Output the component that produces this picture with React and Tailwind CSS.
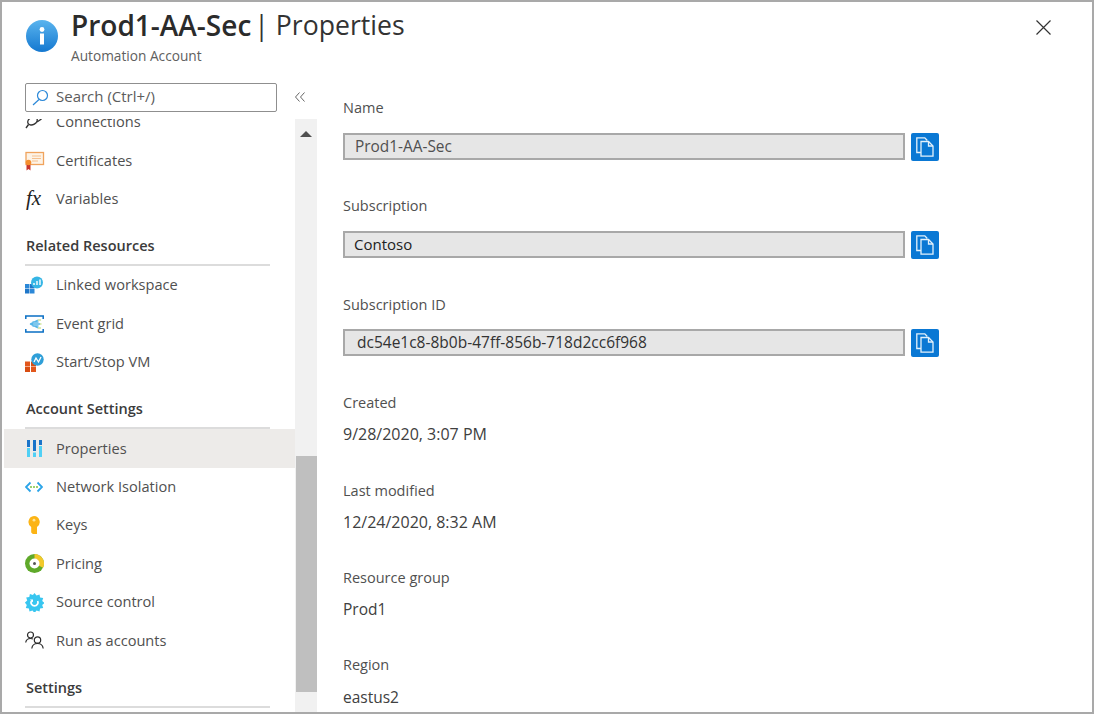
const FONT = "font-['Open_Sans','Noto_Sans',sans-serif]";

const InfoIcon = () => (
  <svg width="32" height="32" viewBox="0 0 32 32">
    <defs>
      <linearGradient id="info" x1="0" y1="0" x2="0" y2="1">
        <stop offset="0" stopColor="#5ab4ee" />
        <stop offset="1" stopColor="#1478d0" />
      </linearGradient>
    </defs>
    <circle cx="16" cy="16" r="16" fill="url(#info)" />
    <circle cx="16" cy="9.5" r="2.4" fill="#fff" />
    <rect x="14" y="13.5" width="4" height="11" fill="#fff" />
  </svg>
);

const ConnectionsIcon = () => (
  <svg width="18" height="18" viewBox="0 0 18 18" fill="none" stroke="#333" strokeWidth="1.4">
    <ellipse cx="7.5" cy="8" rx="5" ry="3.6" transform="rotate(-30 7.500 8)" />
    <path d="M3.500 11.500 1 15M11 4 16.500 2M12 9l4.500-3" />
  </svg>
);

const CertificateIcon = () => (
  <svg width="20" height="20" viewBox="0 0 20 20">
    <rect x="1" y="1.5" width="17.500" height="12" fill="#fdf3e6" stroke="#f0a35c" strokeWidth="1.300" />
    <path d="M7 5h9M7 7.500h9M7 10h6" stroke="#f5c08e" strokeWidth="1" />
    <path d="M1.500 13.500h4v6l-2-1.500-2 1.500z" fill="#c8342c" />
    <circle cx="3.500" cy="11.500" r="2.800" fill="#f48f2e" />
  </svg>
);

const FxIcon = () => (
  <span className="ml-[1px] font-['Liberation_Serif',serif] text-[21px] italic leading-none text-[#222]">fx</span>
);

const LinkedIcon = () => (
  <svg width="18" height="18" viewBox="0 0 18 18">
    <rect x="0" y="8" width="4.500" height="4.500" fill="#2b88d8" />
    <rect x="5" y="8" width="4.500" height="4.500" fill="#1f77c9" />
    <rect x="0" y="13" width="4.500" height="4.500" fill="#1f77c9" />
    <rect x="5" y="13" width="4.500" height="4.500" fill="#2b88d8" />
    <circle cx="12" cy="6.500" r="6" fill="#35b5e5" />
    <path d="M9 9V7M12 9V5M15 9V3.500" stroke="#fff" strokeWidth="1.400" />
  </svg>
);

const EventGridIcon = () => (
  <svg width="19" height="18" viewBox="0 0 19 18" fill="none">
    <path d="M.8 4V1h17.400v3M.8 14v3h17.400v-3" stroke="#0a6fc4" strokeWidth="1.500" />
    <path d="M5 9 13 5M5 9h10M5 9l8 4M7.500 7h6M7.500 11h6" stroke="#56b6e8" strokeWidth="1.300" />
    <path d="M13 5h3M15 9h1.500M13 13h3" stroke="#b5d86a" strokeWidth="1.200" />
  </svg>
);

const StartStopIcon = () => (
  <svg width="19" height="19" viewBox="0 0 19 19">
    <rect x="0" y="8.500" width="5" height="5" fill="#e2571c" />
    <rect x="6" y="8.500" width="5" height="5" fill="#d84d12" />
    <rect x="0" y="14" width="5" height="5" fill="#d84d12" />
    <rect x="6" y="14" width="5" height="5" fill="#e2571c" />
    <circle cx="12.500" cy="6.500" r="6.200" fill="#2f9fd8" />
    <path d="M9 9l2-4 2.500 4 2.500-5" fill="none" stroke="#fff" strokeWidth="1.300" />
  </svg>
);

const PropertiesIcon = () => (
  <svg className="ml-[2px]" width="15" height="17" viewBox="0 0 15 17">
    <rect x="0" y="0" width="3" height="7" fill="#1b74c9" />
    <rect x="0" y="8" width="3" height="9" fill="#50d0f5" />
    <rect x="6" y="0" width="3" height="11" fill="#1b74c9" />
    <rect x="6" y="12.500" width="3" height="4.500" fill="#50d0f5" />
    <rect x="12" y="0" width="3" height="5" fill="#1b74c9" />
    <rect x="12" y="6" width="3" height="11" fill="#50d0f5" />
  </svg>
);

const NetworkIcon = () => (
  <svg width="18" height="12" viewBox="0 0 18 12" fill="none">
    <path d="M5.500 1.500 1 6l4.500 4.500" stroke="#2ba4e8" strokeWidth="1.800" />
    <path d="M12.500 1.500 17 6l-4.500 4.500" stroke="#2ba4e8" strokeWidth="1.800" />
    <circle cx="6" cy="6" r="1" fill="#7cc242" />
    <circle cx="9" cy="6" r="1" fill="#7cc242" />
    <circle cx="12" cy="6" r="1" fill="#7cc242" />
  </svg>
);

const KeyIcon = () => (
  <svg className="ml-[3px]" width="12" height="18" viewBox="0 0 12 18">
    <path d="M6 0a6 6 0 0 1 3 11v7H4.800L3.200 16.500V11A6 6 0 0 1 6 0z" fill="#fcb415" />
    <circle cx="6" cy="4.200" r="1.400" fill="#fde59a" />
  </svg>
);

const PricingIcon = () => (
  <svg width="19" height="19" viewBox="0 0 19 19">
    <circle cx="9.500" cy="9.500" r="9.500" fill="#5fa92a" />
    <path d="M9.500 0a9.500 9.500 0 0 1 8.500 13.800l-8.500-4.300z" fill="#f3c92a" />
    <circle cx="9.500" cy="9.500" r="5" fill="#fff" />
    <circle cx="9.500" cy="9.500" r="1.500" fill="#555" />
  </svg>
);

const SourceControlIcon = () => (
  <svg width="19" height="19" viewBox="0 0 19 19">
    <path
      d="M9.500 0l2 2.400 3-1 .6 3.100 3.100.6-1 3 2.300 1.900-2.300 1.900 1 3-3.100.6-.6 3.100-3-1-2 2.400-2-2.400-3 1-.6-3.100-3.100-.6 1-3L-.1 9.500l2.300-1.900-1-3 3.100-.6.6-3.100 3 1z"
      fill="#38c6f0"
    />
    <path d="M6.300 8a3.500 3.500 0 1 0 6.400 0" fill="none" stroke="#fff" strokeWidth="1.700" />
    <path d="M5 6.500h3v3z" fill="#fff" />
  </svg>
);

const RunAsIcon = () => (
  <svg width="19" height="18" viewBox="0 0 19 18" fill="none" stroke="#2a2a2a" strokeWidth="1.200">
    <circle cx="5.500" cy="4" r="3" />
    <path d="M.7 11.500c.4-2.600 2.200-4 4.800-4 1 0 1.800.2 2.500.6" />
    <circle cx="12.500" cy="9" r="3.200" />
    <path d="M6.800 17.500c.4-3 2.600-5 5.700-5s5.300 2 5.700 5" />
  </svg>
);

const CopyIcon = () => (
  <svg width="18" height="20" viewBox="0 0 18 20" fill="none" stroke="#e4f1fb" strokeWidth="1.300">
    <path d="M5 15.500H.8V.8h8l2.500 2.700" />
    <path d="M5 4.500h7.500l4.500 4.500v10.200H5z" />
    <path d="M12.500 4.500V9H17" />
  </svg>
);

const SECTIONS_A = [
  { label: "Certificates", icon: <CertificateIcon /> },
  { label: "Variables", icon: <FxIcon /> },
];
const SECTIONS_B = [
  { label: "Linked workspace", icon: <LinkedIcon /> },
  { label: "Event grid", icon: <EventGridIcon /> },
  { label: "Start/Stop VM", icon: <StartStopIcon /> },
];
const SECTIONS_C = [
  { label: "Properties", icon: <PropertiesIcon />, active: true },
  { label: "Network Isolation", icon: <NetworkIcon /> },
  { label: "Keys", icon: <KeyIcon /> },
  { label: "Pricing", icon: <PricingIcon /> },
  { label: "Source control", icon: <SourceControlIcon /> },
  { label: "Run as accounts", icon: <RunAsIcon /> },
];

function MenuRow({ label, icon, active }) {
  return (
    <div className={`ml-[2px] flex h-[38.4px] items-center ${active ? "bg-[#edebe9]" : ""}`}>
      <span className="ml-[21px] flex w-[31px] shrink-0 items-center">{icon}</span>
      <span className="text-[14.6px] text-[#505050]">{label}</span>
    </div>
  );
}

function SectionHead({ children }) {
  return (
    <div className="mt-[18px] ml-[23px] mr-[25px] h-[30px] border-b-2 border-[#dcdcdc] pl-[1px] text-[14.5px] font-semibold leading-[20px] text-[#3b3b3b]">
      {children}
    </div>
  );
}

function CopyField({ value, className, textClass }) {
  return (
    <div className={`flex items-start gap-[6px] ${className}`}>
      <div className={`flex h-[27px] w-[562px] items-center border-2 border-[#a8a8a8] bg-[#e6e6e6] ${textClass}`}>
        {value}
      </div>
      <button className="flex h-[28px] w-[28px] items-center justify-center rounded-[2px] bg-[#0a78d4]">
        <CopyIcon />
      </button>
    </div>
  );
}

function Label({ children, className }) {
  return <div className={`h-5 text-[14.5px] leading-5 text-[#505050] ${className}`}>{children}</div>;
}

function Value({ children, className }) {
  return <div className={`h-5 leading-5 text-[#404040] ${className}`}>{children}</div>;
}

export default function App() {
  return (
    <div className={`flex h-[714px] w-[1094px] flex-col overflow-hidden border-2 border-[#a9a9a9] bg-white ${FONT}`}>
      {/* Header */}
      <div className="flex h-[71px] shrink-0">
        <div className="ml-[24px] mt-[18px] shrink-0">
          <InfoIcon />
        </div>
        <div className="ml-[13px] mt-[5px]">
          <div className="flex items-center leading-[36px] text-[#2b2b2b]">
            <span className="text-[28px] font-semibold">Prod1-AA-Sec</span>
            <span className="ml-[3px] text-[26.6px] text-[#333]">| Properties</span>
          </div>
          <div className="mt-[4px] text-[13.7px] leading-[18px] text-[#606060]">Automation Account</div>
        </div>
        <svg className="ml-auto mr-[41px] mt-[18px]" width="15" height="15" viewBox="0 0 15 15" stroke="#333" strokeWidth="1.200">
          <path d="M.5.5l14 14M14.500.5l-14 14" />
        </svg>
      </div>

      <div className="flex min-h-0 flex-1">
        {/* Sidebar */}
        <div className="flex w-[315px] shrink-0 flex-col">
          <div className="flex h-[46px] shrink-0 pt-[10px]">
            <div className="ml-[23px] flex h-[29px] w-[252px] items-center rounded-[2px] border border-[#8f8f8f] pb-[2px] text-[15px] text-[#5c5c5c]">
              <svg className="ml-[6px] mr-[7px] mt-[2px]" width="17" height="17" viewBox="0 0 17 17" fill="none" stroke="#2b88d8" strokeWidth="1.200">
                <circle cx="10.500" cy="6.500" r="5" />
                <path d="M7 10.500 1 16" />
              </svg>
              Search (Ctrl+/)
            </div>
            <svg className="ml-[18px] mt-[9px]" width="10" height="10" viewBox="0 0 10 10" fill="none" stroke="#666" strokeWidth="1">
              <path d="M4.500.5.5 5l4 4.500M9.500.5 5.500 5l4 4.500" />
            </svg>
          </div>

          <div className="flex min-h-0 flex-1">
            <div className="min-w-0 flex-1 overflow-hidden">
              <div className="-mt-[16px]">
                <MenuRow label="Connections" icon={<ConnectionsIcon />} />
                {SECTIONS_A.map((r) => (
                  <MenuRow key={r.label} {...r} />
                ))}
                <SectionHead>Related Resources</SectionHead>
                {SECTIONS_B.map((r) => (
                  <MenuRow key={r.label} {...r} />
                ))}
                <SectionHead>Account Settings</SectionHead>
                {SECTIONS_C.map((r) => (
                  <MenuRow key={r.label} {...r} />
                ))}
                <SectionHead>Settings</SectionHead>
              </div>
            </div>

            {/* Scrollbar */}
            <div className="flex w-[22px] shrink-0 flex-col bg-[#f1f1f1]">
              <div className="flex h-[337px] shrink-0 justify-center pt-[12px]">
                <div className="h-0 w-0 border-x-[6px] border-b-[6px] border-x-transparent border-b-[#505050]" />
              </div>
              <div className="ml-[1px] h-[236px] w-[21px] bg-[#bfbfbf]" />
            </div>
          </div>
        </div>

        {/* Properties */}
        <div className="ml-[26px] flex-1 pt-[25px]">
          <Label>Name</Label>
          <CopyField value="Prod1-AA-Sec" className="mt-[15px]" textClass="pl-[10px] text-[15.4px] text-[#505050]" />
          <Label className="mt-[35px]">Subscription</Label>
          <CopyField value="Contoso" className="mt-[15px]" textClass="pl-[9px] text-[15px] text-[#222]" />
          <Label className="mt-[36px]">Subscription ID</Label>
          <CopyField value="dc54e1c8-8b0b-47ff-856b-718d2cc6f968" className="mt-[14px]" textClass="pl-[12px] text-[15.5px] text-[#333]" />
          <Label className="mt-[36px]">Created</Label>
          <Value className="mt-[11px] text-[16px]">9/28/2020, 3:07 PM</Value>
          <Label className="mt-[37px]">Last modified</Label>
          <Value className="mt-[11px] text-[16px]">12/24/2020, 8:32 AM</Value>
          <Label className="mt-[36px]">Resource group</Label>
          <Value className="mt-[11px] text-[15.5px]">Prod1</Value>
          <Label className="mt-[36px]">Region</Label>
          <Value className="mt-[12px] text-[15.5px]">eastus2</Value>
        </div>
      </div>
    </div>
  );
}
